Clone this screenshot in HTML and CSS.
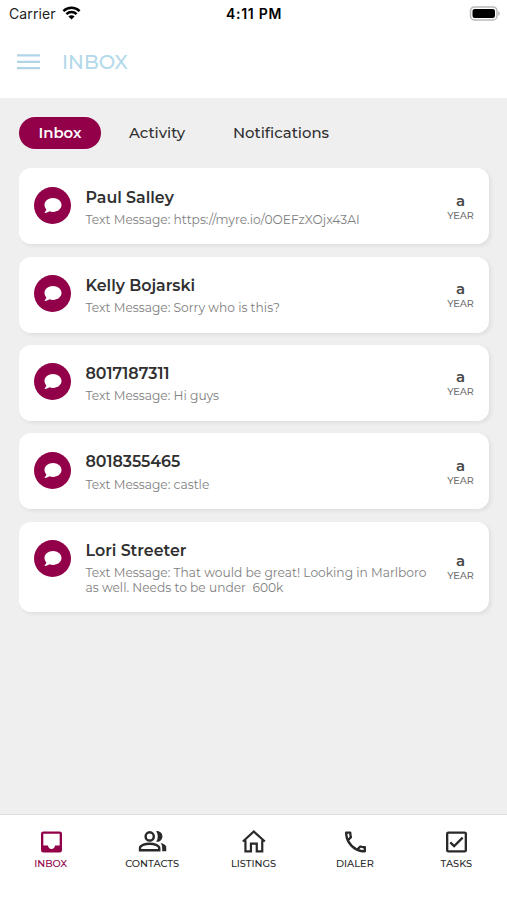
FILE: index.html
```html
<!DOCTYPE html>
<html lang="en">
<head>
<meta charset="utf-8">
<title>Inbox</title>
<link rel="stylesheet" href="styles.css">
</head>
<body>
<svg class="defs" aria-hidden="true">
  <symbol id="bubble" viewBox="0 0 512 512"><path d="M256 32C114.600 32 0 125.100 0 240c0 49.600 21.400 95 57 130.700C44.500 421.100 2.700 466 2.200 466.500c-2.200 2.300-2.800 5.700-1.500 8.700S4.800 480 8 480c66.300 0 116-31.800 140.600-51.400 32.700 12.300 69 19.400 107.400 19.400 141.400 0 256-93.100 256-208S397.400 32 256 32z"/></symbol>
</svg>
<div class="app">
  <header class="header">
    <div class="status">
      <div class="carrier"><span>Carrier</span>
        <svg class="wifi" viewBox="0 0 18 14"><g fill="none" stroke="currentColor" stroke-width="2.500"><path d="M.9 5.100a11.600 11.600 0 0 1 16.200 0"/><path d="M3.900 8.200a7.300 7.300 0 0 1 10.200 0"/></g><path d="M9 13.600 5.900 10.500a4.400 4.400 0 0 1 6.200 0z"/></svg>
      </div>
      <span class="clock">4:11 PM</span>
      <svg class="battery" viewBox="0 0 31 15"><rect x="1.500" y=".9" width="26.500" height="13" rx="4" fill="#fff" stroke="#b9b9b9" stroke-width="1.500"/><rect x="3.500" y="2.900" width="22.500" height="9" rx="2.200"/><path d="M29.300 5.200c2 .6 2 3.900 0 4.500z" fill="#b5b5b5"/></svg>
    </div>
    <div class="titlebar">
      <svg class="menu" viewBox="0 0 23 18"><path d="M0 2.400h23M0 8.800h23M0 15.200h23"/></svg>
      <h1>INBOX</h1>
    </div>
  </header>
  <main class="main">
    <nav class="tabs">
      <span class="tab active">Inbox</span><span class="tab activity">Activity</span><span class="tab notifications">Notifications</span>
    </nav>
    <section class="list">
      <article class="card">
        <div class="avatar"><svg><use href="#bubble"/></svg></div>
        <div class="body"><h2>Paul Salley</h2><p>Text Message: https://myre.io/0OEFzXOjx43AI</p></div>
        <div class="age"><b>a</b><span>YEAR</span></div>
      </article>
      <article class="card">
        <div class="avatar"><svg><use href="#bubble"/></svg></div>
        <div class="body"><h2>Kelly Bojarski</h2><p>Text Message: Sorry who is this?</p></div>
        <div class="age"><b>a</b><span>YEAR</span></div>
      </article>
      <article class="card">
        <div class="avatar"><svg><use href="#bubble"/></svg></div>
        <div class="body"><h2>8017187311</h2><p>Text Message: Hi guys</p></div>
        <div class="age"><b>a</b><span>YEAR</span></div>
      </article>
      <article class="card">
        <div class="avatar"><svg><use href="#bubble"/></svg></div>
        <div class="body"><h2>8018355465</h2><p>Text Message: castle</p></div>
        <div class="age"><b>a</b><span>YEAR</span></div>
      </article>
      <article class="card">
        <div class="avatar"><svg><use href="#bubble"/></svg></div>
        <div class="body"><h2>Lori Streeter</h2><p>Text Message: That would be great! Looking in Marlboro<br>as well. Needs to be under&nbsp; 600k</p></div>
        <div class="age"><b>a</b><span>YEAR</span></div>
      </article>
    </section>
  </main>
  <footer class="nav">
    <div class="item on"><svg viewBox="0 0 24 24"><path d="M19 3H5a2 2 0 0 0-2 2v14a2 2 0 0 0 2 2h14a2 2 0 0 0 2-2V5a2 2 0 0 0-2-2zm0 12h-4c0 1.660-1.350 3-3 3s-3-1.340-3-3H5V5h14v10z"/></svg><span>INBOX</span></div>
    <div class="item contacts"><svg viewBox="0 0 24 24"><g fill="none" stroke="currentColor" stroke-width="2.100"><circle cx="9.600" cy="7.200" r="3.500"/><path d="M1.200 19v-1.700c0-2.300 4.500-3.800 8.300-3.800s8.300 1.500 8.300 3.800V19z"/></g><path d="M15.200 2.700c2.900-.3 5.300 1.800 5.300 4.500s-2.400 4.900-5.300 4.500c1.800-2.700 1.800-6.300 0-9zM19 12.900c2.800.6 5 2.100 5 4.300V20h-3.700v-2.700c0-1.900-.5-3.200-1.300-4.400z"/></svg><span>CONTACTS</span></div>
    <div class="item"><svg viewBox="0 0 24 24"><path d="M2.900 11.600 12.300 3l9.400 8.600M5.100 10.500v9.500h4.700v-6.600h5V20h4.700v-9.500" fill="none" stroke="currentColor" stroke-width="1.900"/></svg><span>LISTINGS</span></div>
    <div class="item"><svg viewBox="0 0 24 24"><path d="M6.540 5c.06.89.210 1.760.450 2.590l-1.200 1.200c-.41-1.200-.67-2.470-.76-3.790h1.510m9.860 12.020c.85.240 1.720.390 2.600.450v1.490c-1.320-.09-2.590-.35-3.800-.75l1.200-1.190M7.500 3H4c-.55 0-1 .45-1 1 0 9.390 7.610 17 17 17 .55 0 1-.45 1-1v-3.490c0-.55-.45-1-1-1-1.240 0-2.450-.2-3.570-.57a.98.980 0 0 0-1.020.24l-2.200 2.200a15.150 15.150 0 0 1-6.590-6.590l2.200-2.200c.28-.28.360-.67.250-1.020A11.360 11.360 0 0 1 8.500 4c0-.55-.45-1-1-1z"/></svg><span>DIALER</span></div>
    <div class="item"><svg viewBox="0 0 24 24"><path d="M19 3H5a2 2 0 0 0-2 2v14a2 2 0 0 0 2 2h14a2 2 0 0 0 2-2V5a2 2 0 0 0-2-2zm0 16H5V5h14v14zM17.990 9l-1.410-1.420-6.590 6.590-2.580-2.570-1.420 1.410 4 3.990z"/></svg><span>TASKS</span></div>
  </footer>
</div>
</body>
</html>
```

FILE: styles.css
```css
* { box-sizing: border-box; margin: 0; padding: 0; }
body { font-family: Montserrat, Inter, sans-serif; color: #303030; background: #fff; }
.defs { display: none; }
.app { width: 507px; height: 900px; display: flex; flex-direction: column; overflow: hidden; }
.header { height: 98px; flex: none; background: #fff; }
.status { height: 28px; display: grid; grid-template-columns: 1fr auto 1fr; align-items: center; padding: 0 7px 0 9px; color: #000; font-family: Inter, sans-serif; }
.carrier { display: flex; align-items: center; gap: 6px; font-size: 14px; letter-spacing: 0.120px; line-height: 18px; color: #222; }
.wifi { width: 19px; height: 14px; margin-top: -3px; color: #000; }
.clock { font-size: 14px; font-weight: 600; letter-spacing: 0.700px; line-height: 18px; margin-left: -1px; }
.battery { width: 31px; height: 15px; justify-self: end; margin-top: -1px; }
.titlebar { display: flex; align-items: center; height: 68px; padding-left: 17px; gap: 22px; }
.menu { width: 23px; height: 18px; fill: none; stroke: #b2d4e7; stroke-width: 2.300; }
h1 { font-size: 19.500px; font-weight: 500; color: #b2d9ea; line-height: 24px; }
.main { flex: 1; background: #efefef; padding: 19px 18px 0 19px; }
.tabs { display: flex; height: 32px; font-size: 14.900px; font-weight: 500; line-height: 32px; white-space: nowrap; }
.tab.active { width: 82px; border-radius: 16px; background: #910048; color: #fff; text-align: center; font-weight: 600; }
.activity { margin-left: 28px; width: 104px; }
.list { display: flex; flex-direction: column; gap: 12.300px; margin-top: 19.400px; }
.card { display: flex; min-height: 76px; width: 470px; padding: 18.300px 15px 16.700px 15px; background: #fff; border-radius: 12px; box-shadow: 2px 2px 4px rgba(0,0,0,.07); }
.avatar { flex: none; width: 37px; height: 37px; border-radius: 50%; background: #910048; display: grid; place-items: center; padding-left: 1px; }
.avatar svg { width: 18px; height: 17px; fill: #fff; }
.body { flex: 1; margin-left: 14.500px; white-space: nowrap; }
h2 { font-size: 15.850px; font-weight: 600; line-height: 20px; width: max-content; margin-top: .9px; }
.body p { margin-top: 5.200px; font-size: 12.240px; line-height: 14.800px; color: #808080; width: max-content; }
.age { flex: none; width: 27px; align-self: center; display: flex; flex-direction: column; align-items: center; padding-top: 1px; }
.age b { font-size: 15px; line-height: 15px; font-weight: 600; color: #4a4a4a; }
.age span { font-size: 9.700px; line-height: 14px; font-weight: 500; color: #707070; margin-top: 1px; }
.nav { flex: none; height: 86px; background: #fff; border-top: 1px solid #dcdcdc; display: grid; grid-template-columns: repeat(5, 1fr); }
.item { display: flex; flex-direction: column; align-items: center; padding-top: 13px; color: #292929; }
.item svg { width: 28px; height: 28px; fill: currentColor; transform: translateX(.5px); }
.item span { font-size: 9.800px; line-height: 12px; font-weight: 500; margin-top: 2px; }
.item.on { color: #910048; }
```
